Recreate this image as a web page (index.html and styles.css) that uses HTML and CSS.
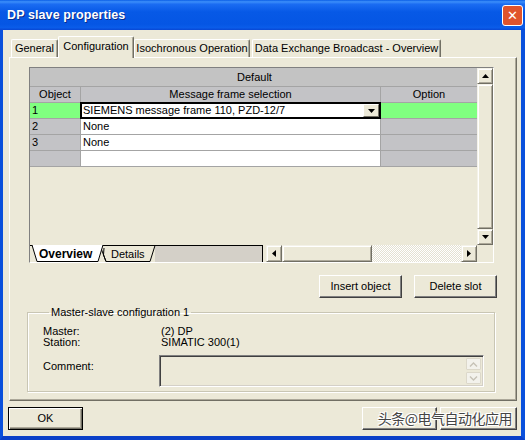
FILE: index.html
```html
<!DOCTYPE html>
<html>
<head>
<meta charset="utf-8">
<link rel="stylesheet" href="styles.css">
</head>
<body>
<div class="window">
  <div class="titlebar">
    <span class="title">DP slave properties</span>
    <span class="close"><span class="close-x">✕</span></span>
  </div>
  <div class="frame">
    <div class="tabs">
      <div class="tab t-general">General</div>
      <div class="tab active t-config">Configuration</div>
      <div class="tab t-iso">Isochronous Operation</div>
      <div class="tab t-dx">Data Exchange Broadcast - Overview</div>
    </div>
    <div class="panel">
      <div class="gridbox">
        <div class="grid-main">
          <div class="table">
            <div class="row head1"><div class="cell">Default</div></div>
            <div class="row head2">
              <div class="cell gray center">Object</div>
              <div class="cell gray center">Message frame selection</div>
              <div class="cell gray center">Option</div>
            </div>
            <div class="row data">
              <div class="cell green">1</div>
              <div class="cell white edit">
                <span>SIEMENS message frame 110, PZD-12/7</span>
                <span class="combo-btn"><svg width="7" height="4" viewBox="0 0 7 4"><polygon points="0,0 7,0 3.5,4" fill="#000"/></svg></span>
              </div>
              <div class="cell green"></div>
            </div>
            <div class="row data">
              <div class="cell gray">2</div>
              <div class="cell white">None</div>
              <div class="cell gray"></div>
            </div>
            <div class="row data">
              <div class="cell gray">3</div>
              <div class="cell white">None</div>
              <div class="cell gray"></div>
            </div>
            <div class="row data">
              <div class="cell gray"></div>
              <div class="cell white"></div>
              <div class="cell gray"></div>
            </div>
          </div>
          <div class="vscroll">
            <div class="sb-btn"><svg width="7" height="4" viewBox="0 0 7 4"><polygon points="3.5,0 7,4 0,4" fill="#000"/></svg></div>
            <div class="sb-thumb"></div>
            <div class="sb-btn"><svg width="7" height="4" viewBox="0 0 7 4"><polygon points="0,0 7,0 3.5,4" fill="#000"/></svg></div>
          </div>
        </div>
        <div class="grid-bottom">
          <svg class="sheet-tabs" width="236" height="17" viewBox="0 0 236 17">
            <rect x="125" y="0" width="108" height="17" fill="#D4D0C8"/>
            <line x1="0" y1="0.5" x2="233" y2="0.5" stroke="#000"/>
            <line x1="232.5" y1="0" x2="232.5" y2="17" stroke="#000"/>
            <polygon points="70,0.5 125,0.5 120,16.5 76,16.5" fill="#ECE9D8" stroke="#000"/>
            <path d="M76,16.5 Q72,10 74,3" fill="none" stroke="#000"/>
            <polygon points="2,0 73,0 68,16.5 7,16.5" fill="#fff"/>
            <polyline points="2,0 7,16.5 68,16.5 73,0" fill="none" stroke="#000"/>
            <text x="9" y="13" class="st-bold">Overview</text>
            <text x="81" y="13" class="st-text">Details</text>
          </svg>
          <div class="hscroll">
            <div class="sb-btn h"><svg width="4" height="7" viewBox="0 0 4 7"><polygon points="4,0 4,7 0,3.5" fill="#000"/></svg></div>
            <div class="sb-thumb hthumb"></div>
            <div class="track"></div>
            <div class="sb-btn h"><svg width="4" height="7" viewBox="0 0 4 7"><polygon points="0,0 0,7 4,3.5" fill="#000"/></svg></div>
          </div>
          <div class="corner"></div>
        </div>
      </div>
      <div class="actions">
        <div class="btn">Insert object</div>
        <div class="btn">Delete slot</div>
      </div>
      <fieldset class="group">
        <legend>Master-slave configuration 1</legend>
        <div class="info">
          <span>Master:</span><span>(2) DP</span>
          <span>Station:</span><span>SIMATIC 300(1)</span>
        </div>
        <div class="comment-row">
          <span class="comment-label">Comment:</span>
          <div class="comment-box">
            <div class="mini"><svg width="9" height="5" viewBox="0 0 9 5"><polyline points="1,4.5 4.5,1 8,4.5" fill="none" stroke="#C6C2B6" stroke-width="1.4"/></svg></div>
            <div class="mini"><svg width="9" height="5" viewBox="0 0 9 5"><polyline points="1,0.5 4.5,4 8,0.5" fill="none" stroke="#C6C2B6" stroke-width="1.4"/></svg></div>
          </div>
        </div>
      </fieldset>
    </div>
    <div class="footer">
      <div class="btn default">OK</div>
      <div class="right-btns">
        <div class="btn wide"></div>
        <div class="btn wide2"></div>
      </div>
      <div class="watermark">头条@电气自动化应用</div>
    </div>
  </div>
</div>
</body>
</html>
```
FILE: styles.css
```css
html, body {
  margin: 0;
  padding: 0;
  background: #fff;
}
body {
  width: 525px;
  height: 440px;
  overflow: hidden;
  font-family: "Liberation Sans", Arial, sans-serif;
  font-size: 11px;
  color: #000;
}
.window {
  width: 525px;
  height: 440px;
  display: flex;
  flex-direction: column;
}
.titlebar {
  height: 30px;
  flex: none;
  display: flex;
  align-items: center;
  padding: 0 2px 0 7px;
  background: linear-gradient(to bottom, #0A5EE6 0%, #3C8FFA 6%, #1A6CF2 14%, #0759E6 40%, #0556E4 80%, #0A5CE9 92%, #0847D4 100%);
  box-sizing: border-box;
}
.title {
  color: #fff;
  font-weight: bold;
  font-size: 12.5px;
  text-shadow: 1px 1px 0 #0A2C8A;
  letter-spacing: 0.1px;
}
.close {
  margin-left: auto;
  margin-top: 1px;
  width: 21px;
  height: 21px;
  box-sizing: border-box;
  border: 1px solid #FFFFFF;
  border-radius: 3px;
  background: #E0532C;
  display: flex;
  align-items: center;
  justify-content: center;
  flex: none;
}
.close-x {
  color: #FFFFFF;
  font-family: "DejaVu Sans", sans-serif;
  font-weight: bold;
  font-size: 13px;
  line-height: 13px;
}
.frame {
  flex: 1;
  background: #ECE9D8;
  border-left: 3px solid #0A50DC;
  border-right: 4px solid #0A50DC;
  border-bottom: 4px solid #0A3FC8;
  display: flex;
  flex-direction: column;
  padding-top: 6px;
}
.tabs {
  height: 21px;
  display: flex;
  align-items: flex-end;
  padding-left: 8px;
}
.tab {
  height: 18px;
  box-sizing: border-box;
  border-left: 1px solid #fff;
  border-top: 1px solid #fff;
  border-right: 1px solid #716F64;
  box-shadow: inset -1px 0 0 #ACA899;
  border-radius: 2px 2px 0 0;
  text-align: center;
  line-height: 17px;
  background: #ECE9D8;
}
.tab.active {
  height: 22px;
  margin-bottom: -1px;
  position: relative;
  z-index: 2;
  line-height: 18px;
}
.t-general { width: 47px; }
.t-config { width: 76px; }
.t-iso { width: 116px; }
.t-dx { width: 189px; margin-left: 2px; }
.panel {
  margin-left: 6px;
  width: 508px;
  height: 344px;
  box-sizing: border-box;
  border-left: 1px solid #fff;
  border-top: 1px solid #fff;
  border-right: 1px solid #716F64;
  border-bottom: 1px solid #716F64;
  box-shadow: inset -1px -1px 0 #ACA899;
  padding-top: 9px;
  display: flex;
  flex-direction: column;
}
.gridbox {
  margin-left: 19px;
  width: 465px;
  height: 196px;
  box-sizing: border-box;
  border-top: 1px solid #808080;
  border-left: 1px solid #808080;
  border-right: 1px solid #fff;
  border-bottom: 1px solid #fff;
  display: flex;
  flex-direction: column;
}
.grid-main {
  height: 177px;
  display: flex;
}
.table {
  width: 447px;
  display: flex;
  flex-direction: column;
}
.row {
  display: grid;
  grid-template-columns: 50px 299px 96px;
  column-gap: 1px;
  background: #A4A4A4;
  border-bottom: 1px solid #A4A4A4;
}
.head1 {
  grid-template-columns: 1fr;
  height: 18px;
  background: #C3C3C3;
}
.head1 .cell {
  text-align: center;
  line-height: 18px;
  background: #C3C3C3;
}
.cell {
  height: 15px;
  line-height: 15px;
  padding-left: 2px;
  white-space: nowrap;
  overflow: hidden;
}
.head2 .cell { padding-left: 0; }
.center { text-align: center; }
.gray { background: #C3C3C6; }
.white { background: #fff; }
.green { background: #80FF80; }
.edit {
  position: relative;
  z-index: 1;
  overflow: visible;
  display: flex;
  align-items: center;
  box-shadow: 0 0 0 1px #000, inset 0 0 0 1px #000;
}
.combo-btn {
  margin-left: auto;
  margin-right: 1px;
  width: 16px;
  height: 13px;
  box-sizing: border-box;
  background: #ECE9D8;
  border: 1px solid;
  border-color: #fff #716F64 #716F64 #fff;
  display: flex;
  align-items: center;
  justify-content: center;
}
.vscroll {
  width: 16px;
  display: flex;
  flex-direction: column;
}
.sb-btn {
  width: 16px;
  height: 16px;
  box-sizing: border-box;
  background: #ECE9D8;
  border: 1px solid;
  border-color: #F4F2E8 #716F64 #716F64 #F4F2E8;
  box-shadow: inset 1px 1px 0 #fff, inset -1px -1px 0 #ACA899;
  display: flex;
  align-items: center;
  justify-content: center;
  flex: none;
}
.sb-btn.h { height: 17px; }
.sb-thumb {
  flex: 1;
  background: #ECE9D8;
  border: 1px solid;
  border-color: #F4F2E8 #716F64 #716F64 #F4F2E8;
  box-shadow: inset 1px 1px 0 #fff, inset -1px -1px 0 #ACA899;
}
.grid-bottom {
  height: 17px;
  display: flex;
}
.sheet-tabs {
  display: block;
  flex: none;
}
.st-bold {
  font-family: "Liberation Sans", Arial, sans-serif;
  font-weight: bold;
  font-size: 12px;
}
.st-text {
  font-family: "Liberation Sans", Arial, sans-serif;
  font-size: 11px;
}
.hscroll {
  width: 211px;
  display: flex;
}
.hthumb {
  flex: none;
  width: 90px;
  box-sizing: border-box;
}
.track {
  flex: 1;
  background: repeating-conic-gradient(#fff 0% 25%, #E4E1D2 0% 50%) 0 0 / 2px 2px;
}
.corner {
  width: 16px;
  background: #ECE9D8;
}
.actions {
  display: flex;
  justify-content: flex-end;
  gap: 12px;
  margin: 12px 19px 0 0;
}
.btn {
  width: 83px;
  height: 23px;
  box-sizing: border-box;
  background: #ECE9D8;
  border: 1px solid;
  border-color: #fff #404040 #404040 #fff;
  box-shadow: inset -1px -1px 0 #808080;
  text-align: center;
  line-height: 20px;
}
.group {
  margin: 8px 21px 0 17px;
  border: 1px solid #C9C6B4;
  box-shadow: inset 1px 1px 0 #fff, 1px 1px 0 #fff;
  padding: 7px 10px 4px 15px;
  min-width: 0;
}
.group legend {
  padding: 0 2px;
  margin-left: 6px;
  line-height: 13px;
  font-size: 11px;
}
.info {
  display: grid;
  grid-template-columns: 118px auto;
  line-height: 11px;
}
.comment-row {
  display: flex;
  margin-top: 7px;
}
.comment-label {
  width: 116px;
  padding-top: 5px;
}
.comment-box {
  width: 325px;
  height: 32px;
  box-sizing: border-box;
  border: 1px solid;
  border-color: #808080 #fff #fff #808080;
  box-shadow: inset 1px 1px 0 #404040, inset -1px -1px 0 #D4D0C8;
  background: #ECE9D8;
  display: flex;
  flex-direction: column;
  align-items: flex-end;
  justify-content: center;
  gap: 2px;
  padding-right: 2px;
}
.mini {
  width: 15px;
  height: 12px;
  box-sizing: border-box;
  border: 1px solid #DCD8CA;
  border-radius: 1px;
  background: #F3F2EC;
  display: flex;
  align-items: center;
  justify-content: center;
}
.footer {
  position: relative;
  margin-top: 6px;
  height: 23px;
  display: flex;
  padding: 0 4px 0 5px;
}
.btn.default {
  width: 75px;
  border: 1px solid #000;
  box-shadow: inset 1px 1px 0 #fff, inset -1px -1px 0 #716F64, inset -2px -2px 0 #ACA899;
}
.right-btns {
  margin-left: auto;
  display: flex;
  gap: 3px;
}
.btn.wide { width: 75px; }
.btn.wide2 { width: 77px; }
.watermark {
  position: absolute;
  right: 9px;
  top: 2px;
  font-family: "Noto Sans CJK SC", sans-serif;
  font-size: 14px;
  line-height: 18px;
  letter-spacing: -0.5px;
  color: #444;
  text-shadow: 1px 1px 0 #fff, -1px -1px 0 #fff, 1px -1px 0 #fff, -1px 1px 0 #fff;
}
```
